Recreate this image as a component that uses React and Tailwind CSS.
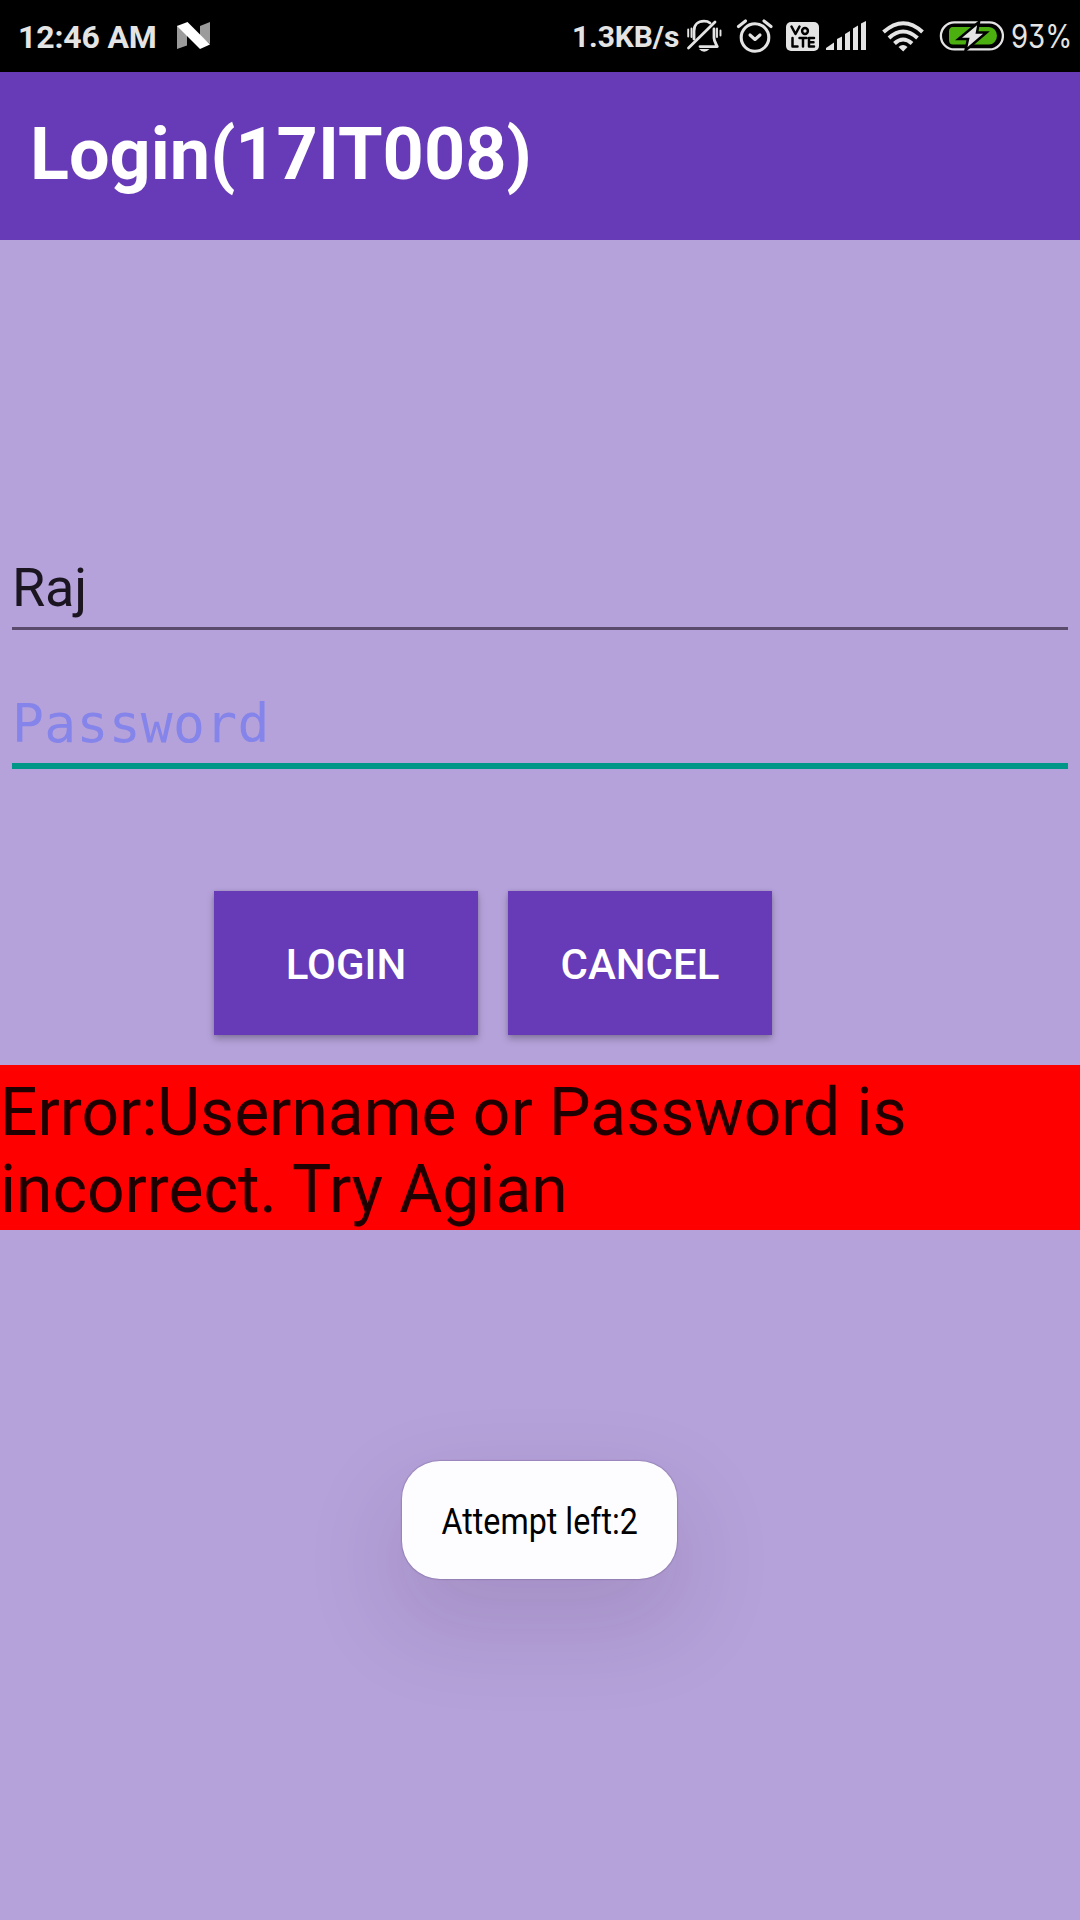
import React from "react";

const GREY = "#e4e4e4";

function NougatIcon() {
  return (
    <svg className="ml-[22px] mt-[22px] shrink-0" width="34" height="28" viewBox="177 22 34 28">
      <path d="M177 25.5L187 33V45.5L177 49Z" fill="#9b9b9b" />
      <path d="M200 26L210 22V44L200 36Z" fill="#9b9b9b" />
      <path d="M177 26L187.500 22L210 44.500L200 49Z" fill="#fff" />
    </svg>
  );
}

function StatusIcons() {
  return (
    <svg className="shrink-0" width="320" height="72" viewBox="684 0 320 72" fill="none">
      {/* muted bell */}
      <g stroke={GREY} strokeWidth="2.8" strokeLinecap="round" strokeLinejoin="round">
        <path d="M694 39V31C694 25 698 21.200 704 21.200C706.500 21.200 708.500 21.800 710 23" />
        <path d="M714 29V38C714 41 715.500 43 717.300 46.600H700" />
        <path d="M688.500 48L715 22" />
        <path d="M688.200 29.500V36.500M691.500 28.500V37M717 28.500V37M720.500 30.500V35.500" strokeWidth="1.9" />
      </g>
      <path d="M699 49H709.500Q704 54.500 699 49Z" fill={GREY} />
      {/* alarm clock */}
      <g stroke={GREY} strokeWidth="3.1" strokeLinecap="round" strokeLinejoin="round">
        <circle cx="755" cy="37.500" r="13.800" />
        <path d="M750 35L755 39.500L760 35" />
        <path d="M738.500 26.500L745.500 21M771 26.500L764 21" />
      </g>
      {/* VoLTE badge */}
      <rect x="786" y="22" width="33" height="29" rx="5" fill={GREY} />
      <g stroke="#000" strokeWidth="2.500" strokeLinecap="round" strokeLinejoin="round">
        <path d="M791.500 26.500L795.500 34L799.500 26.500" />
        <circle cx="805" cy="31" r="2.900" />
        <path d="M792.500 38V46.500H797.500M799.500 38H806.500M803 38V46.500M814 38H809V46.500H814M809 42.200H813.500" />
      </g>
      {/* signal bars */}
      <g fill={GREY}>
        <path d="M826 48L834 42.500V50H826Z" />
        <path d="M837 39L842 36.500V50H837Z" />
        <path d="M845 34L850 31V50H845Z" />
        <path d="M853 28.500L858 25.500V50H853Z" />
        <path d="M861 23.500L866 21V50H861Z" />
      </g>
      {/* wifi */}
      <g stroke={GREY} strokeWidth="4">
        <path d="M883.500 32Q903.500 14.500 922.500 32" />
        <path d="M889 38Q903 25 917.500 38" />
        <path d="M894.500 43.500Q903 35.500 912 43.500" />
      </g>
      <path d="M898.500 47Q903 43 907.500 47L903.200 51.500Z" fill={GREY} />
      {/* charging battery */}
      <rect x="940.900" y="22.400" width="62" height="27" rx="13.500" stroke={GREY} strokeWidth="2.300" />
      <path d="M953 27H989A8 8.750 0 0 1 989 44.500H953Q949 44.500 949 40V31.500Q949 27 953 27Z" fill="#4caf10" />
      <path d="M979 22L958.500 39H968L965.500 50.500L986.500 32.500H977Z" fill={GREY} stroke="#000" strokeWidth="2.500" />
    </svg>
  );
}

function StatusBar() {
  return (
    <div className="flex h-[72px] bg-black text-[#e4e4e4]">
      <span className="ml-[18px] w-[137px] shrink-0 whitespace-nowrap text-[32px] leading-[74px] font-bold tracking-[-0.15px]">12:46 AM</span>
      <NougatIcon />
      <span className="ml-[361px] w-[112px] shrink-0 whitespace-nowrap text-[30px] leading-[73px] font-bold tracking-[-0.1px]">1.3KB/s</span>
      <StatusIcons />
      <span className="ml-[7px] w-[60px] shrink-0 origin-left scale-x-[0.86] whitespace-nowrap font-['Inter',sans-serif] text-[32px] leading-[73px] [font-feature-settings:'cv09']">
        93%
      </span>
    </div>
  );
}

function ActionButton({ children }) {
  return (
    <button className="h-36 w-[264px] bg-[#673ab7] pt-1 text-[42px] leading-none font-medium text-white shadow-[0_4px_7px_rgba(0,0,0,0.25),0_0_3px_rgba(0,0,0,0.12)]">
      {children}
    </button>
  );
}

export default function App() {
  return (
    <div className="relative flex h-[1920px] w-[1080px] flex-col overflow-hidden bg-[#b5a2da] font-['Roboto',sans-serif]">
      <StatusBar />
      <header className="h-[168px] bg-[#673ab7] pl-[30px]">
        <h1 className="text-[72px] leading-[166px] font-bold text-white">Login(17IT008)</h1>
      </header>
      <main className="flex flex-col">
        <div className="mx-3 mt-[292px] h-[98px] border-b-[3px] border-[#5a4b6d] text-[54px] leading-[112px] tracking-[-0.2px] text-[#1b1521]">
          Raj
        </div>
        <div className="mx-3 mt-[33px] h-[106px] border-b-[6px] border-[#009688] font-['DejaVu_Sans_Mono',monospace] text-[53px] leading-[122px] tracking-[0.3px] text-[#8484ea]">
          Password
        </div>
        <div className="mt-[122px] ml-[214px] flex gap-[30px]">
          <ActionButton>LOGIN</ActionButton>
          <ActionButton>CANCEL</ActionButton>
        </div>
        <p className="mt-[30px] h-[165px] bg-[#ff0000] pt-[9px] text-[66px] leading-[77px] tracking-[-0.04px] text-[#200000]">
          Error:Username or Password is
          <br />
          incorrect. Try Agian
        </p>
      </main>
      <div className="absolute top-[1461px] left-[402px] flex h-[118px] w-[275px] items-center justify-center rounded-[38px] bg-[#fdfdff] pt-1 shadow-[0_0_1px_1px_rgba(60,40,90,0.2),0_40px_90px_10px_rgba(60,30,60,0.13)]">
        <span className="origin-center scale-x-[0.895] whitespace-nowrap text-[36px] leading-none text-black">
          Attempt left:2
        </span>
      </div>
    </div>
  );
}
